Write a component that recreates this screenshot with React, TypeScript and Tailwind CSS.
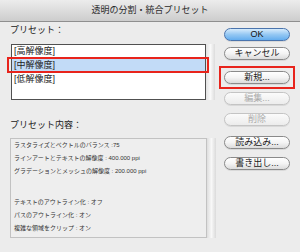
import React from "react";

const FONT = '"Liberation Sans", "Noto Sans CJK JP", sans-serif';

type BtnProps = { label: string; variant?: "default" | "primary" | "disabled"; className?: string };

function AquaButton({ label, variant = "default", className = "" }: BtnProps) {
  let cls =
    "border-[#8a8a8a] bg-linear-to-b from-[#ffffff] via-[#f4f4f4] to-[#dcdcdc] text-[#1a1a1a]";
  if (variant === "primary")
    cls = "border-[#4a74ad] bg-linear-to-b from-[#d6ebfc] via-[#95c8f3] to-[#64adee] text-[#111]";
  if (variant === "disabled")
    cls = "border-[#c4c4c4] bg-linear-to-b from-[#fbfbfb] to-[#ececec] text-[#ababab]";
  return (
    <div
      className={`flex h-[13px] w-[66px] items-center justify-center rounded-full border text-[9px] leading-[11px] shadow-[0_1px_0_rgba(0,0,0,0.08)] ${cls} ${className}`}
    >
      {label}
    </div>
  );
}

export default function App() {
  return (
    <div
      className="relative h-[252px] w-[300px] overflow-hidden bg-[#ececec] text-[#222]"
      style={{ fontFamily: FONT }}
    >
      {/* Title bar */}
      <div className="flex h-[22px] items-center justify-center border-b border-[#8f8f8f] bg-linear-to-b from-[#ececec] to-[#cdcdcd] text-[9px] text-[#2a2a2a]">
        透明の分割・統合プリセット
      </div>

      <div className="flex">
        {/* Left column */}
        <div className="flex w-[216px] flex-col pt-[2px]">
          <div className="ml-[10px] h-[12px] text-[9px] leading-[12px] text-[#222]">プリセット：</div>

          <div className="ml-[11px] mt-[8px] flex h-[56px]">
            <div className="relative h-[56px] w-[195px] border border-[#505050] bg-white text-[9px] leading-[14px] text-[#222]">
              <div className="h-[13px] pl-[2px] leading-[13px]">[高解像度]</div>
              <div className="h-[14px] bg-[#c2dbf7] pl-[2px]">[中解像度]</div>
              <div className="h-[14px] pl-[2px]">[低解像度]</div>
              <div className="absolute left-[-5px] top-[12px] h-[16px] w-[202px] border-2 border-[#e8241c]" />
            </div>
            <div className="h-[56px] w-[9px] bg-linear-to-r from-[#e2e2e2] via-[#f9f9f9] to-[#dcdcdc]" />
          </div>

          <div className="ml-[10px] mt-[19px] h-[12px] text-[9px] leading-[12px] text-[#222]">
            プリセット内容：
          </div>

          <div className="ml-[10px] mt-[7px] flex h-[100px]">
            <div className="h-[100px] w-[197px] border border-[#c2c2c2] bg-[#eeeeee] pl-[3px] text-[6px] leading-[13px] text-[#333]">
              <div>ラスタライズとベクトルのバランス :75</div>
              <div>ラインアートとテキストの解像度 : 400.000 ppi</div>
              <div>グラデーションとメッシュの解像度 : 200.000 ppi</div>
              <div className="mt-[18px]">テキストのアウトライン化 : オフ</div>
              <div>パスのアウトライン化 : オン</div>
              <div>複雑な領域をクリップ : オン</div>
            </div>
            <div className="h-[100px] w-[9px] bg-linear-to-r from-[#dedede] via-[#f8f8f8] to-[#dadada]" />
          </div>
        </div>

        {/* Right column */}
        <div className="ml-[8px] flex flex-col pt-[6px]">
          <AquaButton label="OK" variant="primary" />
          <AquaButton label="キャンセル" className="mt-[6px]" />
          <div className="relative mt-[11px]">
            <AquaButton label="新規..." />
            <div className="absolute left-[-5px] top-[-5px] h-[23px] w-[76px] border-2 border-[#e8241c]" />
          </div>
          <AquaButton label="編集..." variant="disabled" className="mt-[8px]" />
          <AquaButton label="削除" variant="disabled" className="mt-[8px]" />
          <AquaButton label="読み込み..." className="mt-[10px]" />
          <AquaButton label="書き出し..." className="mt-[8px]" />
        </div>
      </div>
    </div>
  );
}
